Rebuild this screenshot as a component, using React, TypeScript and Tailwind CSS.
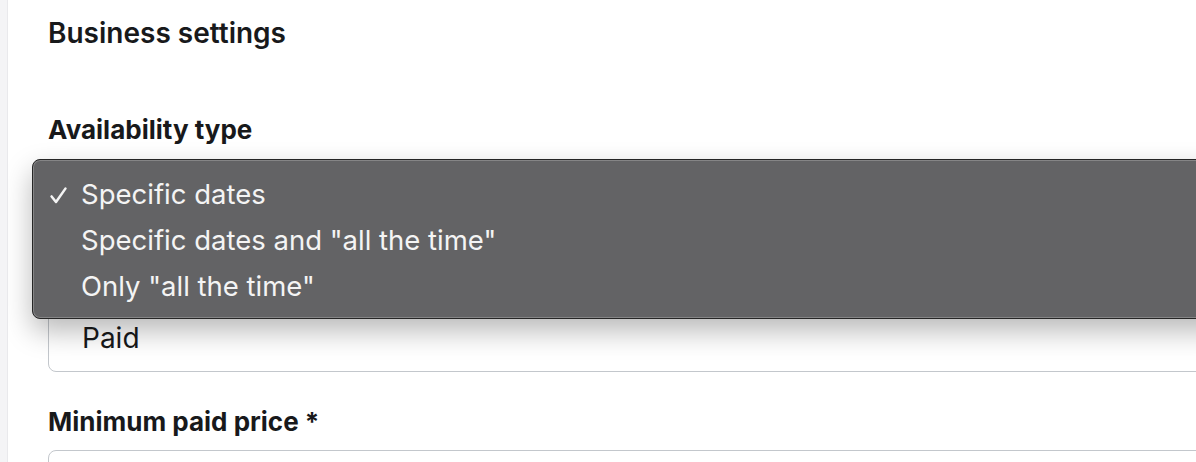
import React from 'react';

const options = [
  { label: 'Specific dates', checked: true },
  { label: 'Specific dates and "all the time"', checked: false },
  { label: 'Only "all the time"', checked: false },
];

const Check = () => (
  <svg width="17" height="17" viewBox="0 0 17 17" fill="none">
    <path d="M1.6 9.4 L6 15 L15.4 1.6" stroke="#f4f4f4" strokeWidth="2.5" strokeLinecap="round" strokeLinejoin="round" />
  </svg>
);

const App: React.FC = () => {
  return (
    <div
      className="flex h-[462px] w-[1196px] overflow-hidden bg-white text-[#18191b]"
      style={{ fontFamily: 'Inter, "Noto Sans", sans-serif' }}
    >
      <div className="w-[8px] shrink-0 border-r border-[#e9e9ec] bg-[#f4f4f6]" />

      <div className="relative flex-1 overflow-hidden">
        <div className="flex flex-col pl-[40px] pt-[17px]">
          <h2 className="text-[28px] font-semibold leading-[32px]">Business settings</h2>

          <label className="mt-[65px] text-[26px] font-bold leading-[32px]">Availability type</label>
          {/* select, covered by the open popup */}
          <div className="mt-[14px] h-[66px] w-[1200px] rounded-[8px] border border-[#c3c7cc]" />

          {/* pricing type label row, covered */}
          <div className="mt-[20px] h-[32px]" />
          <div className="mt-[26px] flex h-[68px] w-[1200px] items-center rounded-[8px] border border-[#c3c7cc] px-[33px] text-[28px]">
            Paid
          </div>

          <label className="mt-[34px] text-[26px] font-bold leading-[32px]">Minimum paid price *</label>
          <div className="mt-[12px] h-[66px] w-[1200px] rounded-[8px] border border-[#c3c7cc]" />
        </div>

        {/* native select popup */}
        <div className="absolute left-[24px] top-[159px] w-[1200px] rounded-[8px] border border-[#262626] bg-[#636365] pb-[8px] pt-[12px] shadow-[0_12px_28px_rgba(0,0,0,0.28),inset_0_0_0_1px_rgba(255,255,255,0.22)]">
          {options.map((o) => (
            <div key={o.label} className="flex h-[46px] items-center text-[27.5px] text-[#f4f4f4]">
              <span className="flex w-[48px] items-center pl-[17px]">{o.checked ? <Check /> : null}</span>
              <span>{o.label}</span>
            </div>
          ))}
        </div>
      </div>
    </div>
  );
};

export default App;
